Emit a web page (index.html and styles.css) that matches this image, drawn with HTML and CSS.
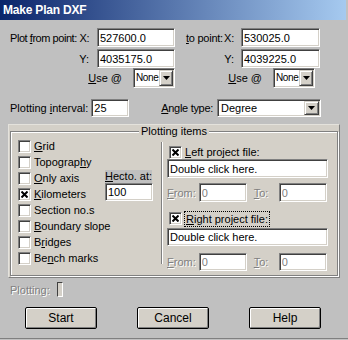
FILE: index.html
```html
<!DOCTYPE html>
<html lang="en">
<head>
    <meta charset="UTF-8">
    <title>Make Plan DXF</title>
    <link rel="stylesheet" href="styles.css">
</head>
<body>
    <div class="window">
        <div class="titlebar">Make Plan DXF</div>

        <div class="coords">
            <label class="lbl-split"><span>Plot <u>f</u>rom point:</span><span>X:</span></label>
            <input class="field" type="text" value="527600.0">
            <label class="lbl-split to"><span><u>t</u>o point:</span><span>X:</span></label>
            <input class="field" type="text" value="530025.0">

            <label class="lbl-r">Y:</label>
            <input class="field" type="text" value="4035175.0">
            <label class="lbl-r to">Y:</label>
            <input class="field" type="text" value="4039225.0">
        </div>

        <div class="use-row">
            <label class="lbl-r"><u>U</u>se @</label>
            <div class="combo small"><span class="combo-text">None</span><span class="combo-btn"><svg width="7" height="4" viewBox="0 0 7 4"><path d="M0 0h7L3.5 4z" fill="#000"/></svg></span></div>
            <label class="lbl-r"><u>U</u>se @</label>
            <div class="combo small"><span class="combo-text">None</span><span class="combo-btn"><svg width="7" height="4" viewBox="0 0 7 4"><path d="M0 0h7L3.5 4z" fill="#000"/></svg></span></div>
        </div>

        <div class="settings-row">
            <label>Plotting <u>i</u>nterval:</label>
            <input class="field interval" type="text" value="25">
            <label class="angle-lbl"><u>A</u>ngle type:</label>
            <div class="combo angle"><span class="combo-text">Degree</span><span class="combo-btn"><svg width="7" height="4" viewBox="0 0 7 4"><path d="M0 0h7L3.5 4z" fill="#000"/></svg></span></div>
        </div>

        <div class="items-panel">
            <div class="group">
                <div class="legend">Plotting items</div>
                <div class="group-body">
                    <div class="item-list">
                        <div class="item r1"><span class="chk"></span><span><u>G</u>rid</span></div>
                        <div class="item r2"><span class="chk"></span><span>Topograp<u>h</u>y</span></div>
                        <div class="item r3"><span class="chk"></span><span><u>O</u>nly axis</span></div>
                        <div class="item r4"><span class="chk"><svg width="7" height="7" viewBox="0 0 7 7"><path d="M0.5 0.5l6 6M6.5 0.5l-6 6" stroke="#000" stroke-width="2"/></svg></span><span><u>K</u>ilometers</span></div>
                        <div class="item r5"><span class="chk"></span><span>Section no.s</span></div>
                        <div class="item r6"><span class="chk"></span><span><u>B</u>oundary slope</span></div>
                        <div class="item r7"><span class="chk"></span><span>B<u>r</u>idges</span></div>
                        <div class="item r8"><span class="chk"></span><span>Be<u>n</u>ch marks</span></div>
                        <div class="hecto">
                            <label class="hecto-lbl"><u>H</u>ecto. at:</label>
                            <input class="field hecto-in" type="text" value="100">
                        </div>
                    </div>

                    <div class="separator"></div>

                    <div class="files">
                        <div class="item file-head"><span class="chk"><svg width="7" height="7" viewBox="0 0 7 7"><path d="M0.5 0.5l6 6M6.5 0.5l-6 6" stroke="#000" stroke-width="2"/></svg></span><span><u>L</u>eft project file:</span></div>
                        <input class="field file-in" type="text" value="Double click here.">
                        <div class="range">
                            <label class="disabled"><u>F</u>rom:</label>
                            <input class="field range-in off" type="text" value="0">
                            <label class="disabled to-lbl"><u>T</u>o:</label>
                            <input class="field range-in off" type="text" value="0">
                        </div>

                        <div class="item file-head second"><span class="chk"><svg width="7" height="7" viewBox="0 0 7 7"><path d="M0.5 0.5l6 6M6.5 0.5l-6 6" stroke="#000" stroke-width="2"/></svg></span><span class="focus"><u>R</u>ight project file:</span></div>
                        <input class="field file-in second" type="text" value="Double click here.">
                        <div class="range second">
                            <label class="disabled"><u>F</u>rom:</label>
                            <input class="field range-in off" type="text" value="0">
                            <label class="disabled to-lbl"><u>T</u>o:</label>
                            <input class="field range-in off" type="text" value="0">
                        </div>
                    </div>
                </div>
            </div>
        </div>

        <div class="progress-row">
            <label class="disabled">Plotting:</label>
            <div class="progress"></div>
        </div>

        <div class="buttons">
            <button class="btn">Start</button>
            <button class="btn">Cancel</button>
            <button class="btn">Help</button>
        </div>
    </div>
</body>
</html>
```

FILE: styles.css
```css
body {
    margin: 0;
    background-color: #c0c0c0;
    font-family: "Liberation Sans", Arial, sans-serif;
    font-size: 11px;
    color: #000;
}
.window {
    width: 348px;
    height: 338px;
    border-bottom: 1px solid #808080;
    overflow: hidden;
    background-color: #c0c0c0;
}
.titlebar {
    height: 20px;
    line-height: 20px;
    padding-left: 3px;
    margin-right: 2px;
    background: linear-gradient(to right, #0a246a, #a6caf0);
    color: #fff;
    font-weight: bold;
    font-size: 12px;
    letter-spacing: -0.2px;
}
u {
    text-decoration: underline;
}
label {
    white-space: nowrap;
}

/* sunken edit box */
.field {
    box-sizing: border-box;
    margin: 0;
    height: 19px;
    padding: 0 0 0 2px;
    font: inherit;
    color: #000;
    background-color: #fff;
    border: 1px solid;
    border-color: #808080 #fff #fff #808080;
    box-shadow: inset 1px 1px 0 #404040, inset -1px -1px 0 #d4d0c8;
    outline: none;
}
.field.off {
    color: #808080;
}

.coords {
    display: grid;
    grid-template-columns: 89px 78px 66px 79px;
    grid-template-rows: 19px 19px;
    row-gap: 2px;
    margin: 8px 0 0 8px;
}
.lbl-split {
    display: flex;
    justify-content: space-between;
    align-items: center;
    padding: 0 8px 0 2px;
    letter-spacing: -0.45px;
}
.lbl-split.to {
    padding: 0 7px 0 11px;
    letter-spacing: -0.25px;
}
.lbl-r {
    text-align: right;
    align-self: center;
    padding-right: 8px;
}
.lbl-r.to {
    padding-right: 7px;
}

.use-row {
    display: grid;
    grid-template-columns: 125px 42px 98px 42px;
    height: 20px;
    margin: 0 0 0 8px;
}
.use-row .lbl-r {
    padding-right: 11px;
}

/* combo box */
.combo {
    box-sizing: border-box;
    display: flex;
    align-items: stretch;
    background-color: #fff;
    border: 1px solid;
    border-color: #808080 #fff #fff #808080;
    box-shadow: inset 1px 1px 0 #404040, inset -1px -1px 0 #d4d0c8;
    padding: 1px;
}
.combo.small {
    height: 20px;
}
.combo-text {
    flex: 1;
    padding-left: 2px;
    line-height: 16px;
    overflow: hidden;
    white-space: nowrap;
}
.combo.small .combo-text {
    padding-left: 1px;
    font-size: 10px;
    letter-spacing: -0.4px;
}
.combo-btn {
    box-sizing: border-box;
    flex: none;
    width: 15px;
    display: flex;
    align-items: center;
    justify-content: center;
    background-color: #d4d0c8;
    border: 1px solid;
    border-color: #d4d0c8 #404040 #404040 #d4d0c8;
    box-shadow: inset 1px 1px 0 #fff, inset -1px -1px 0 #808080;
}
.combo.small .combo-btn {
    width: 14px;
}

.settings-row {
    display: flex;
    align-items: center;
    width: 311px;
    height: 19px;
    margin: 10px 0 0 10px;
}
.interval {
    width: 38px;
    height: 18px;
    margin-left: 3px;
}
.angle-lbl {
    margin-left: auto;
    letter-spacing: -0.3px;
}
.combo.angle {
    width: 104px;
    height: 18px;
    margin-left: 4px;
    align-self: flex-end;
}
.combo.angle .combo-text {
    line-height: 14px;
}

/* plotting items group */
.items-panel {
    box-sizing: border-box;
    width: 332px;
    height: 154px;
    margin: 7px 0 0 8px;
    padding: 6px 1px 1px 1px;
    background-color: #d4d0c8;
    border: 1px solid;
    border-color: #e4e2dc #808080 #808080 #e4e2dc;
}
.group {
    box-sizing: border-box;
    height: 145px;
    border: 1px solid #808080;
    box-shadow: inset 1px 1px 0 #fff, 1px 1px 0 #fff;
}
.legend {
    width: fit-content;
    margin: -7px auto 0;
    padding: 0 2px;
    line-height: 13px;
    background-color: #d4d0c8;
}
.group-body {
    display: flex;
    padding: 0 0 0 7px;
}
.item-list {
    display: grid;
    grid-template-columns: 87px 48px;
    grid-template-rows: repeat(8, 16px);
    width: 143px;
}
.item {
    display: flex;
    align-items: center;
    gap: 3px;
    grid-column: 1 / 3;
}
.r1 { grid-row: 1; }
.r2 { grid-row: 2; }
.r3 { grid-row: 3; grid-column: 1; }
.r4 { grid-row: 4; grid-column: 1; }
.r5 { grid-row: 5; }
.r6 { grid-row: 6; }
.r7 { grid-row: 7; }
.r8 { grid-row: 8; }
.chk {
    box-sizing: border-box;
    flex: none;
    width: 13px;
    height: 13px;
    display: flex;
    align-items: center;
    justify-content: center;
    background-color: #fff;
    border: 1px solid;
    border-color: #808080 #fff #fff #808080;
    box-shadow: inset 1px 1px 0 #404040, inset -1px -1px 0 #d4d0c8;
}
.hecto {
    grid-column: 2;
    grid-row: 3 / 6;
    display: flex;
    flex-direction: column;
}
.hecto-lbl {
    width: 47px;
    height: 13px;
    line-height: 13px;
    background-color: #c0c0c0;
}
.hecto-in {
    width: 48px;
    height: 18px;
}
.separator {
    width: 1px;
    height: 122px;
    margin-top: 4px;
    background-color: #808080;
    border-right: 1px solid #fff;
}
.files {
    display: flex;
    flex-direction: column;
    width: 161px;
    margin-left: 4px;
    padding-top: 7px;
}
.file-head {
    height: 14px;
    padding-left: 2px;
}
.file-head.second {
    height: 17px;
    margin-top: 8px;
}
.focus {
    outline: 1px dotted #000;
    padding: 0 1px;
    line-height: 14px;
}
.file-in {
    width: 161px;
    height: 19px;
}
.file-in.second {
    height: 18px;
    margin-top: 1px;
}
.range {
    display: flex;
    align-items: center;
    margin-top: 5px;
}
.range.second {
    margin-top: 7px;
}
.range-in {
    width: 48px;
    height: 19px;
    margin-left: 3px;
}
.range.second .range-in {
    height: 18px;
}
.to-lbl {
    margin-left: 7px;
    width: 22px;
}
.disabled {
    color: #808080;
    text-shadow: 1px 1px 0 #fff;
}

.progress-row {
    display: flex;
    align-items: center;
    height: 15px;
    margin: 4px 0 0 10px;
}
.progress {
    box-sizing: border-box;
    width: 6px;
    height: 15px;
    margin-left: 7px;
    border: 1px solid;
    border-color: #404040 #fff #fff #404040;
    background-color: #d4d0c8;
}

.buttons {
    display: flex;
    gap: 40px;
    margin: 10px 0 0 25px;
}
.btn {
    box-sizing: border-box;
    width: 72px;
    height: 22px;
    padding: 0;
    font: inherit;
    font-size: 12px;
    color: #000;
    background-color: #d4d0c8;
    border: 1px solid #000;
    border-radius: 2px;
    box-shadow: inset 1px 1px 0 #fff, inset -1px -1px 0 #808080;
}
```
